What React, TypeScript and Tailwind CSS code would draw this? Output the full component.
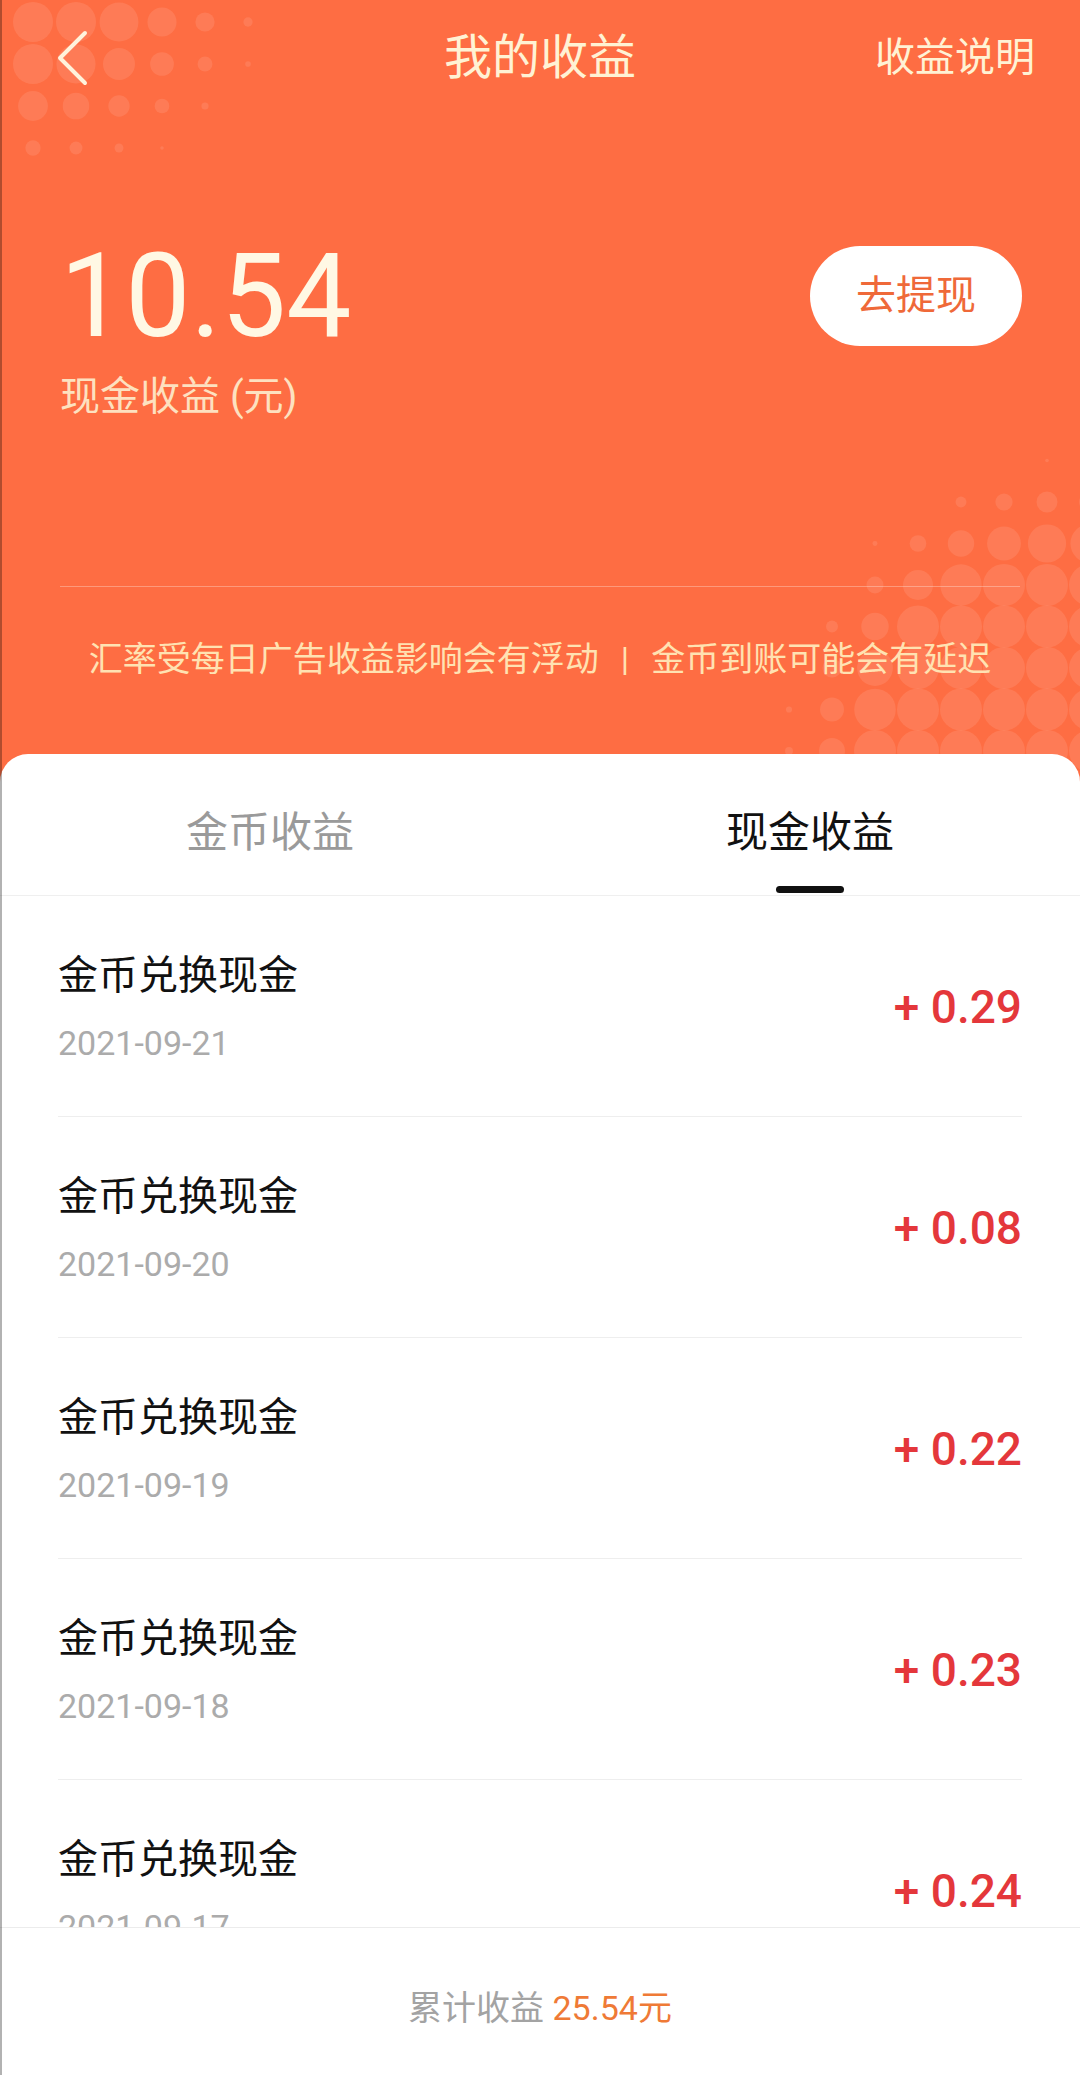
import React from "react";

type Dot = { x: number; y: number; d: number };

function clamp(v: number, lo: number, hi: number) {
  return Math.max(lo, Math.min(hi, v));
}

// bubble pattern in the top-left corner
function topLeftDots(): Dot[] {
  const dots: Dot[] = [];
  for (let i = 0; i < 8; i++) {
    for (let j = 0; j < 5; j++) {
      const x = 33 + i * 43;
      const y = 22 + j * 42;
      const dist = Math.sqrt(x * x + 2.25 * y * y);
      const d = clamp((42 * (290 - dist)) / 180, 0, 40);
      if (d > 3) dots.push({ x, y, d });
    }
  }
  return dots;
}

// bubble pattern around the disclaimer, bottom right of the header
function bottomRightDots(): Dot[] {
  const dots: Dot[] = [];
  for (let i = -1; i < 9; i++) {
    for (let j = -1; j < 7; j++) {
      const x = 1047 - i * 43;
      const y = 502 + j * 41.5;
      const dist = Math.sqrt((1080 - x) ** 2 + (760 - y) ** 2);
      const d = 42 * clamp((310 - dist) / 100, 0, 1);
      if (d > 3) dots.push({ x, y, d });
    }
  }
  return dots;
}

const rows = [
  { date: "2021-09-21", amount: "0.29" },
  { date: "2021-09-20", amount: "0.08" },
  { date: "2021-09-19", amount: "0.22" },
  { date: "2021-09-18", amount: "0.23" },
  { date: "2021-09-17", amount: "0.24" },
];

function Bubbles() {
  const dots = [...topLeftDots(), ...bottomRightDots()];
  return (
    <svg
      className="absolute left-0 top-0 pointer-events-none"
      width="1080"
      height="780"
      viewBox="0 0 1080 780"
    >
      {dots.map((p, k) => (
        <circle key={k} cx={p.x} cy={p.y} r={p.d / 2} fill="#ffffff" fillOpacity={0.1} />
      ))}
    </svg>
  );
}

function EarningRow({ date, amount }: { date: string; amount: string }) {
  return (
    <div className="mx-[58px] flex items-center justify-between border-b border-[#eeeeee] pt-[52px] pb-[51px]">
      <div className="flex flex-col">
        <span className="text-[40px] leading-[56px] text-[#111111]">金币兑换现金</span>
        <span className="mt-[17px] text-[34px] leading-[44px] text-[#ababab]">{date}</span>
      </div>
      <span className="text-[46px] leading-[56px] font-medium text-[#e4373b]">+ {amount}</span>
    </div>
  );
}

export default function App() {
  return (
    <div className="relative w-[1080px] h-[2075px] flex flex-col overflow-hidden bg-[#fe6d43] font-['Roboto','Noto_Sans_CJK_SC',sans-serif]">
      <Bubbles />

      {/* header */}
      <div className="relative flex flex-col">
        <div className="grid grid-cols-[1fr_auto_1fr] items-center h-[116px] px-[45px]">
          <svg className="ml-[11px]" width="32" height="56" viewBox="0 0 32 56" fill="none">
            <polyline
              points="29,3 4,28 29,53"
              stroke="#fff3dc"
              strokeWidth="4"
              strokeLinecap="round"
              strokeLinejoin="round"
            />
          </svg>
          <span className="text-[48px] leading-[64px] text-[#fff2d4]">我的收益</span>
          <span className="justify-self-end text-[40px] leading-[56px] text-[#fff2d4]">收益说明</span>
        </div>

        <div className="flex items-center justify-between mt-[120px] pl-[60px] pr-[58px]">
          <span className="text-[116px] leading-[120px] text-[#fff8e4]">10.54</span>
          <button className="w-[212px] h-[100px] rounded-full bg-white text-[40px] text-[#ef6939]">
            去提现
          </button>
        </div>
        <div className="mt-[13px] pl-[60px] text-[40px] leading-[56px] text-[#fde1c0]">现金收益 (元)</div>

        <div className="mt-[161px] mx-[60px] h-px bg-white/30" />

        <div className="mt-[48px] text-center text-[34px] leading-[48px] text-[#ffe2b2]">
          汇率受每日广告收益影响会有浮动<span className="mx-[22px]">|</span>金币到账可能会有延迟
        </div>
      </div>

      {/* card */}
      <div className="relative mt-[71px] flex-1 min-h-0 flex flex-col bg-white rounded-t-[28px]">
        <div className="flex h-[142px] border-b border-[#efefef]">
          <div className="flex-1 flex flex-col items-center pt-[50px]">
            <span className="text-[42px] leading-[58px] text-[#9a9a9a]">金币收益</span>
          </div>
          <div className="flex-1 flex flex-col items-center pt-[50px]">
            <span className="text-[42px] leading-[58px] text-[#111111]">现金收益</span>
            <span className="mt-[24px] w-[68px] h-[7px] rounded-full bg-[#111111]" />
          </div>
        </div>

        <div className="flex-1 min-h-0 overflow-hidden">
          {rows.map((r) => (
            <EarningRow key={r.date} date={r.date} amount={r.amount} />
          ))}
        </div>

        <div className="h-[148px] shrink-0 border-t border-[#ececec] bg-white pt-[56px] text-center text-[34px] leading-[48px]">
          <span className="text-[#a3a3a3]">累计收益 </span>
          <span className="text-[#ef7a36]">25.54元</span>
        </div>
      </div>

      <div className="absolute left-0 top-0 bottom-0 w-[2px] bg-black/30" />
    </div>
  );
}
